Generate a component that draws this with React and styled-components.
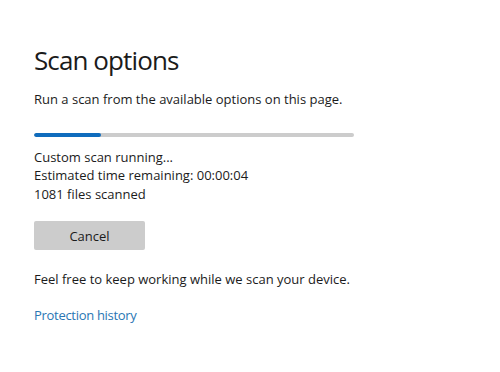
import React from "react";
import styled, { createGlobalStyle } from "styled-components";

const GlobalStyle = createGlobalStyle`
    html, body {
        margin: 0;
        padding: 0;
        background: #ffffff;
    }
    body {
        font-family: "Open Sans", "Noto Sans", "Liberation Sans", sans-serif;
        color: #1b1b1b;
    }
`;

const Page = styled.div`
    width: 500px;
    height: 372px;
    box-sizing: border-box;
    padding: 40px 34px 0 34px;
    display: flex;
    flex-direction: column;
    align-items: flex-start;
`;

const Title = styled.h1`
    margin: 0;
    font-size: 26px;
    font-weight: 400;
    line-height: 40px;
    letter-spacing: -0.9px;
`;

const Text = styled.p`
    margin: ${(p) => p.$top || 0}px 0 0 0;
    font-size: 13px;
    line-height: 18.5px;
`;

const ProgressTrack = styled.div`
    margin-top: 24px;
    width: 320px;
    height: 4px;
    border-radius: 2px;
    background: #cccccc;
    overflow: hidden;
`;

const ProgressFill = styled.div`
    height: 100%;
    border-radius: 2px;
    background: #0f6cbd;
`;

const Status = styled.div`
    margin-top: 11px;
    display: flex;
    flex-direction: column;
`;

const Button = styled.button`
    margin-top: 18px;
    width: 111px;
    height: 29px;
    border: none;
    border-radius: 2px;
    background: #cccccc;
    font-family: inherit;
    font-size: 13px;
    color: #1b1b1b;
    cursor: pointer;
`;

const Link = styled.a`
    margin-top: 17px;
    font-size: 13px;
    line-height: 18px;
    letter-spacing: -0.3px;
    color: #2a76b4;
    text-decoration: none;
    cursor: pointer;
`;

export default function App() {
    const progress = 21;
    return (
        <>
            <GlobalStyle/>
            <Page>
                <Title>Scan options</Title>
                <Text $top={10}>Run a scan from the available options on this page.</Text>
                <ProgressTrack>
                    <ProgressFill style={{width: `${progress}%`}}/>
                </ProgressTrack>
                <Status>
                    <Text>Custom scan running...</Text>
                    <Text>Estimated time remaining: 00:00:04</Text>
                    <Text>1081 files scanned</Text>
                </Status>
                <Button>Cancel</Button>
                <Text $top={20}>Feel free to keep working while we scan your device.</Text>
                <Link>Protection history</Link>
            </Page>
        </>
    );
}
